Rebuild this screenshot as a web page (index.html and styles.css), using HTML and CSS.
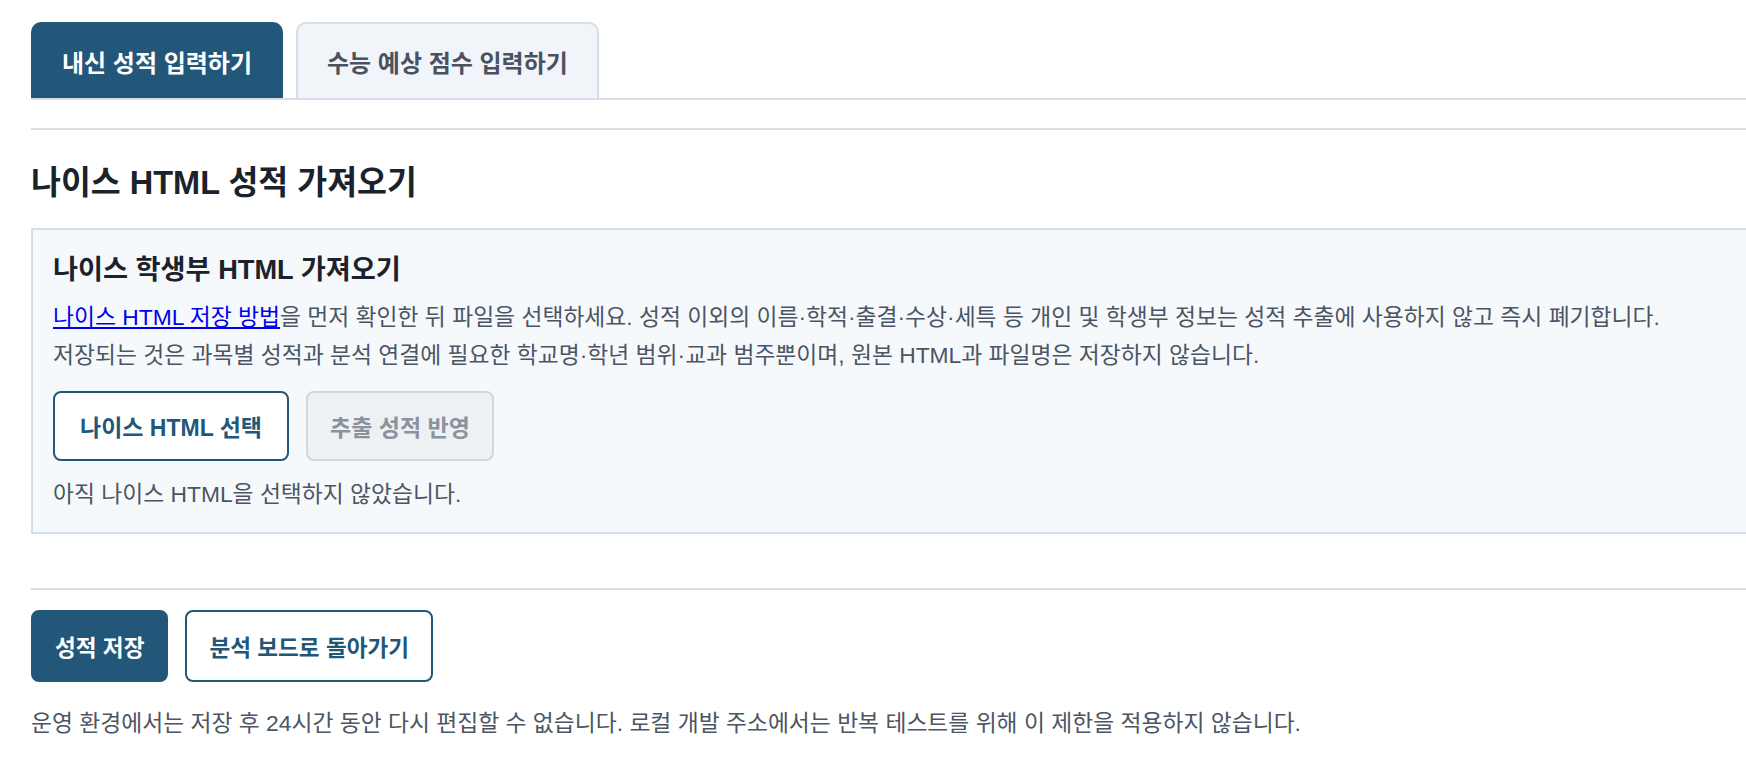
FILE: index.html
```html
<!DOCTYPE html>
<html lang="ko">
<head>
<meta charset="utf-8">
<title>성적 입력</title>
<link rel="stylesheet" href="styles.css">
</head>
<body>
<div class="page">
  <nav class="tabs">
    <button class="tab tab-active">내신 성적 입력하기</button>
    <button class="tab">수능 예상 점수 입력하기</button>
  </nav>
  <section class="section">
    <h2 class="title">나이스 HTML 성적 가져오기</h2>
    <div class="import-box">
      <h3 class="box-title">나이스 학생부 HTML 가져오기</h3>
      <p class="desc"><a href="#" class="link">나이스 HTML 저장 방법</a>을 먼저 확인한 뒤 파일을 선택하세요. 성적 이외의 이름·학적·출결·수상·세특 등 개인 및 학생부 정보는 성적 추출에 사용하지 않고 즉시 폐기합니다.<br>저장되는 것은 과목별 성적과 분석 연결에 필요한 학교명·학년 범위·교과 범주뿐이며, 원본 HTML과 파일명은 저장하지 않습니다.</p>
      <div class="btn-row">
        <button class="btn btn-outline btn-wide">나이스 HTML 선택</button>
        <button class="btn btn-disabled">추출 성적 반영</button>
      </div>
      <p class="status">아직 나이스 HTML을 선택하지 않았습니다.</p>
    </div>
  </section>
  <footer class="actions">
    <div class="btn-row">
      <button class="btn btn-primary">성적 저장</button>
      <button class="btn btn-outline">분석 보드로 돌아가기</button>
    </div>
    <p class="note">운영 환경에서는 저장 후 24시간 동안 다시 편집할 수 없습니다. 로컬 개발 주소에서는 반복 테스트를 위해 이 제한을 적용하지 않습니다.</p>
  </footer>
</div>
</body>
</html>
```

FILE: styles.css
```css
html, body {
  margin: 0;
  padding: 0;
  background: #ffffff;
  overflow-x: hidden;
}
body {
  font-family: "Liberation Sans", "Noto Sans CJK KR", sans-serif;
  color: #4b5563;
}
.page {
  padding: 22px 0 0 31px;
  margin-right: -40px;
}
.tabs {
  display: flex;
  gap: 13px;
  border-bottom: 2px solid #d5dde6;
}
.tab {
  font-family: inherit;
  font-size: 24px;
  font-weight: 700;
  height: 76px;
  padding: 0 29px;
  border-radius: 10px 10px 0 0;
  border: 2px solid #d5dde6;
  border-bottom: none;
  background: #f1f5f9;
  color: #4a5261;
  cursor: pointer;
}
.tab-active {
  background: #22577a;
  border-color: #22577a;
  color: #ffffff;
}
.section {
  margin-top: 28px;
  border-top: 2px solid #d5dde6;
  padding-top: 34px;
}
.title {
  margin: 0;
  font-size: 32.5px;
  line-height: 38px;
  font-weight: 700;
  color: #1b222c;
}
.import-box {
  margin-top: 26px;
  background: #f6f9fc;
  border: 2px solid #d5dde6;
  padding: 24px 0 19px 20px;
}
.box-title {
  margin: 0;
  font-size: 27.2px;
  line-height: 32px;
  font-weight: 700;
  color: #1b222c;
}
.desc {
  margin: 12px 0 0;
  font-size: 22.8px;
  line-height: 38px;
}
.link {
  color: #0000ee;
  text-decoration: underline;
}
.btn-row {
  display: flex;
  gap: 17px;
}
.import-box .btn-row {
  margin-top: 17px;
}
.btn {
  font-family: inherit;
  font-size: 23px;
  font-weight: 700;
  height: 70px;
  padding: 0 22px;
  border-radius: 8px;
  cursor: pointer;
}
.btn-wide {
  padding: 0 25px;
}
.btn-outline {
  background: #ffffff;
  border: 2px solid #22577a;
  color: #22577a;
}
.btn-disabled {
  background: #edf1f4;
  border: 2px solid #cfd8e1;
  color: #8a929c;
}
.btn-primary {
  background: #22577a;
  border: 2px solid #22577a;
  color: #ffffff;
}
.status {
  margin: 14px 0 0;
  font-size: 22.8px;
  line-height: 38px;
}
.actions {
  margin-top: 54px;
  border-top: 2px solid #d5dde6;
  padding-top: 20px;
}
.actions .btn {
  height: 72px;
  font-size: 22.6px;
}
.note {
  margin: 22px 0 0;
  font-size: 22.8px;
  line-height: 38px;
}
```
